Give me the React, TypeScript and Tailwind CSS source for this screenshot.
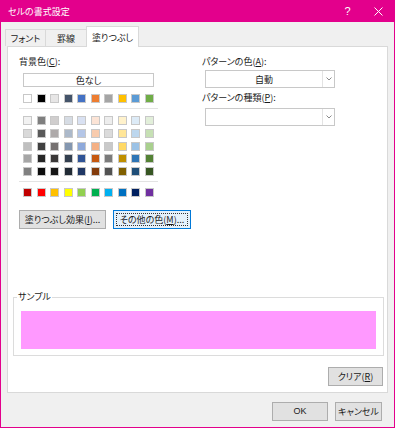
import React from "react";

const themeRow = [
  "bg-[#FFFFFF]", "bg-[#000000]", "bg-[#E7E6E6]", "bg-[#44546A]", "bg-[#4472C4]",
  "bg-[#ED7D31]", "bg-[#A5A5A5]", "bg-[#FFC000]", "bg-[#5B9BD5]", "bg-[#70AD47]",
];

const tintRows = [
  ["bg-[#F2F2F2]", "bg-[#7F7F7F]", "bg-[#D0CECE]", "bg-[#D6DCE4]", "bg-[#D9E1F2]", "bg-[#FCE4D6]", "bg-[#EDEDED]", "bg-[#FFF2CC]", "bg-[#DDEBF7]", "bg-[#E2EFDA]"],
  ["bg-[#D9D9D9]", "bg-[#595959]", "bg-[#AEAAAA]", "bg-[#ACB9CA]", "bg-[#B4C6E7]", "bg-[#F8CBAD]", "bg-[#DBDBDB]", "bg-[#FFE699]", "bg-[#BDD7EE]", "bg-[#C6E0B4]"],
  ["bg-[#BFBFBF]", "bg-[#404040]", "bg-[#757171]", "bg-[#8497B0]", "bg-[#8EA9DB]", "bg-[#F4B084]", "bg-[#C9C9C9]", "bg-[#FFD966]", "bg-[#9BC2E6]", "bg-[#A9D08E]"],
  ["bg-[#A6A6A6]", "bg-[#262626]", "bg-[#3A3838]", "bg-[#333F4F]", "bg-[#305496]", "bg-[#C65911]", "bg-[#7B7B7B]", "bg-[#BF8F00]", "bg-[#2F75B5]", "bg-[#548235]"],
  ["bg-[#808080]", "bg-[#0D0D0D]", "bg-[#161616]", "bg-[#222B35]", "bg-[#203764]", "bg-[#833C0C]", "bg-[#525252]", "bg-[#806000]", "bg-[#1F4E78]", "bg-[#375623]"],
];

const stdRow = [
  "bg-[#C00000]", "bg-[#FF0000]", "bg-[#FFC000]", "bg-[#FFFF00]", "bg-[#92D050]",
  "bg-[#00B050]", "bg-[#00B0F0]", "bg-[#0070C0]", "bg-[#002060]", "bg-[#7030A0]",
];

function Swatch({ c }: { c: string }) {
  return <div className={`w-[9px] h-[9px] border border-[#c8c8c8] ${c}`} />;
}

function SwatchRow({ row }: { row: string[] }) {
  return (
    <div className="grid grid-cols-[repeat(10,9px)] gap-x-[4.5px]">
      {row.map((c, i) => (
        <Swatch key={i} c={c} />
      ))}
    </div>
  );
}

function Chevron() {
  return (
    <div className="w-[12px] h-[16px] border-l border-[#e3e3e3] flex items-center justify-center">
      <svg width="6" height="4" viewBox="0 0 6 4">
        <path d="M0.5 0.5 L3 3 L5.5 0.5" fill="none" stroke="#8a8a8a" strokeWidth="1" />
      </svg>
    </div>
  );
}

export default function App() {
  return (
    <div className="w-[395px] h-[428px] border border-[#e3008c] bg-[#f0f0f0] flex flex-col text-[9px] text-[#1a1a1a] whitespace-nowrap font-['Noto_Sans_CJK_JP','Noto_Sans',sans-serif] [font-feature-settings:'palt'] leading-none overflow-hidden">
      {/* Title bar */}
      <div className="h-[21px] shrink-0 bg-[#e3008c] flex items-center pl-[7px] text-white">
        <span className="text-[9px]">セルの書式設定</span>
        <div className="flex-1" />
        <div className="w-[31px] h-full flex items-center justify-center text-[11px] font-['Liberation_Sans',sans-serif]">?</div>
        <div className="w-[31px] h-full flex items-center justify-center">
          <svg width="9" height="9" viewBox="0 0 9 9">
            <path d="M0.5 0.5 L8.5 8.5 M8.5 0.5 L0.5 8.5" stroke="#ffffff" strokeWidth="1" />
          </svg>
        </div>
      </div>

      {/* Tabs */}
      <div className="h-[24px] shrink-0 flex items-end pl-[4px]">
        <div className="w-[41px] h-[17px] border border-b-0 border-[#d9d9d9] flex items-center justify-center">フォント</div>
        <div className="w-[40px] h-[17px] border-t border-[#d9d9d9] flex items-center justify-center">罫線</div>
        <div className="relative z-10 -mb-px w-[53px] h-[21px] bg-white border border-b-0 border-[#d9d9d9] flex items-center justify-center">塗りつぶし</div>
      </div>

      {/* Panel */}
      <div className="mx-[6px] h-[347px] shrink-0 bg-white border border-[#d9d9d9] flex flex-col">
        <div className="flex pt-[8px] pl-[11px]">
          {/* Left column */}
          <div className="w-[183px] flex flex-col">
            <div className="h-[12px] flex items-center">
              背景色(<span className="underline">C</span>):
            </div>
            <div className="mt-[6px] ml-[4px] w-[131px] h-[14px] border border-[#c8c8c8] flex items-center justify-center">色なし</div>
            <div className="mt-[7px] ml-[4px]">
              <SwatchRow row={themeRow} />
            </div>
            <div className="mt-[5px] w-[139px] h-px bg-[#e3e3e3]" />
            <div className="mt-[7px] ml-[4px] flex flex-col gap-y-[3.75px]">
              {tintRows.map((r, i) => (
                <SwatchRow key={i} row={r} />
              ))}
            </div>
            <div className="mt-[5px] w-[139px] h-px bg-[#e3e3e3]" />
            <div className="mt-[6px] ml-[4px]">
              <SwatchRow row={stdRow} />
            </div>
            <div className="mt-[13px] flex gap-[7px]">
              <div className="w-[87px] h-[19px] bg-[#e1e1e1] border border-[#adadad] flex items-center justify-center">
                塗りつぶし効果(<span className="underline">I</span>)...
              </div>
              <div className="w-[78px] h-[19px] bg-[#e5f1fb] border border-[#0078d7] p-[2px]">
                <div className="w-full h-full border border-dotted border-[#333] flex items-center justify-center">
                  その他の色(<span className="underline">M</span>)...
                </div>
              </div>
            </div>
          </div>

          {/* Right column */}
          <div className="flex flex-col">
            <div className="h-[12px] flex items-center">
              パターンの色(<span className="underline">A</span>):
            </div>
            <div className="mt-[3px] ml-[3px] w-[130px] h-[18px] border border-[#c8c8c8] flex items-center">
              <div className="flex-1 text-center">自動</div>
              <Chevron />
            </div>
            <div className="mt-[3px] h-[12px] flex items-center">
              パターンの種類(<span className="underline">P</span>):
            </div>
            <div className="mt-[5px] ml-[3px] w-[130px] h-[18px] border border-[#c8c8c8] flex items-center">
              <div className="flex-1" />
              <Chevron />
            </div>
          </div>
        </div>

        {/* Sample */}
        <div className="relative mt-[68px] ml-[5px] mr-[3px] border border-[#dcdcdc] pt-[13px] pb-[6px] px-[7px]">
          <span className="absolute -top-[6px] left-[3px] bg-white px-px">サンプル</span>
          <div className="h-[38px] bg-[#ff99ff]" />
        </div>

        <div className="mt-[11px] mr-[4px] flex justify-end">
          <div className="w-[55px] h-[19px] bg-[#e1e1e1] border border-[#adadad] flex items-center justify-center">
            クリア(<span className="underline">R</span>)
          </div>
        </div>
      </div>

      {/* Bottom buttons */}
      <div className="flex-1 flex justify-end items-start pt-[9px] pr-[12px] gap-[7px]">
        <div className="w-[56px] h-[19px] bg-[#e1e1e1] border border-[#adadad] flex items-center justify-center font-['Liberation_Sans',sans-serif]">OK</div>
        <div className="w-[47px] h-[19px] bg-[#e1e1e1] border border-[#adadad] flex items-center justify-center">キャンセル</div>
      </div>
    </div>
  );
}
